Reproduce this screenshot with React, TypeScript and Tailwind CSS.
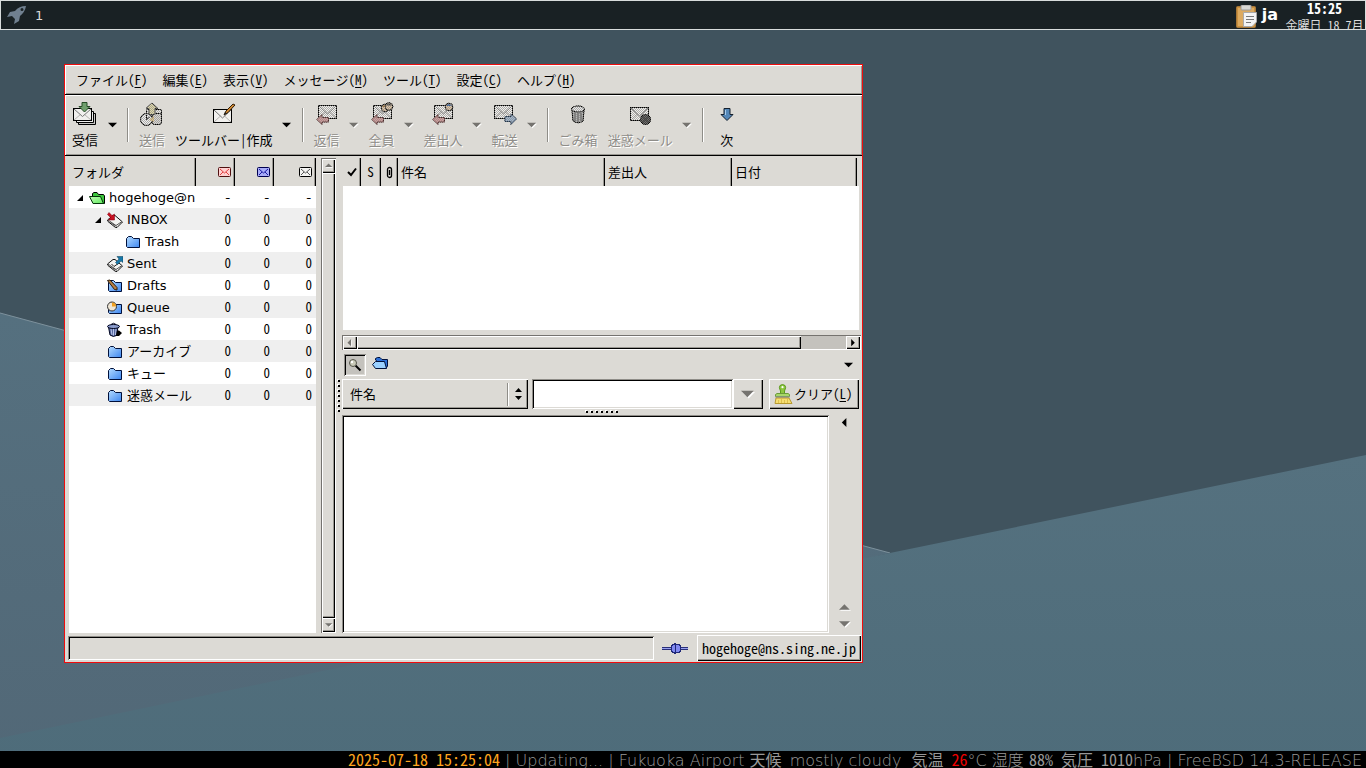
import React from "react";

const mono = "font-['Noto_Sans_Mono_CJK_JP','Noto_Sans_CJK_JP',monospace]";
const sans = "font-['DejaVu_Sans','Noto_Sans_CJK_JP',sans-serif]";
const raised =
  "bg-[#dcdad5] shadow-[inset_1px_1px_0_#fff,inset_-1px_-1px_0_#000,inset_-2px_-2px_0_#9a9892]";
const sunken =
  "shadow-[inset_1px_1px_0_#8f8d88,inset_-1px_-1px_0_#fff,inset_2px_2px_0_#000,inset_-2px_-2px_0_#dcdad5]";

/* ---------- icons ---------- */

function Envelope({ x, y, w = 19, h = 14 }: { x: number; y: number; w?: number; h?: number }) {
  return (
    <g>
      <rect x={x + 0.5} y={y + 0.5} width={w - 1} height={h - 1} fill="#f1f0ee" stroke="#000" />
      <path
        d={`M${x + 1} ${y + h - 1}L${x + w / 2 - 2} ${y + h / 2}M${x + w - 1} ${y + h - 1}L${x + w / 2 + 2} ${y + h / 2}`}
        stroke="#b5b3b0"
        fill="none"
      />
      <path
        d={`M${x + 1} ${y + 1}L${x + w / 2} ${y + h / 2 + 2}L${x + w - 1} ${y + 1}`}
        stroke="#777"
        fill="none"
      />
    </g>
  );
}

function Icon({ children, off = false }: { children: React.ReactNode; off?: boolean }) {
  return (
    <svg width="26" height="26" viewBox="0 0 26 26" aria-hidden="true" className="shrink-0">
      {off ? (
        <>
          <defs>
            <pattern id="checker" width="2" height="2" patternUnits="userSpaceOnUse">
              <rect width="1" height="1" fill="#fff" />
              <rect x="1" y="1" width="1" height="1" fill="#fff" />
            </pattern>
            <mask id="stipple">
              <rect width="26" height="26" fill="url(#checker)" shapeRendering="crispEdges" />
            </mask>
          </defs>
          <g className="opacity-60 brightness-60">{children}</g>
          <g mask="url(#stipple)">{children}</g>
        </>
      ) : (
        children
      )}
    </svg>
  );
}

const RedArrow = () => (
  <path d="M2.5 17.5L8 12.5V15.5H14.5V20H8V22.5Z" fill="#d49a9a" stroke="#502828" />
);
const Head = ({ x, y, c }: { x: number; y: number; c: string }) => (
  <g>
    <circle cx={x} cy={y} r="3.8" fill="#dfc4a4" stroke="#000" />
    <path d={`M${x - 3} ${y - 1}Q${x} ${y - 5} ${x + 3} ${y - 1}Z`} fill={c} />
  </g>
);

const ReceiveIcon = () => (
  <Icon>
    <path d="M6.5 19V22.5H23.5V11.5H20" fill="#c9c8c6" stroke="#000" />
    <path d="M4.500 18V20.500H21.500V9.500H19" fill="#eee" stroke="#000" />
    <Envelope x={1} y={6} w={19} h={13} />
    <path d="M10 0.500H15V4.500H18L12.500 10L7 4.500H10Z" fill="#6f9f6c" stroke="#274d27" />
  </Icon>
);
const SendIcon = () => (
  <Icon off>
    <rect x="7.5" y="7.5" width="15" height="12" rx="1" fill="#e8e6e2" stroke="#000" />
    <circle cx="7.500" cy="17.500" r="6" fill="#eee" stroke="#000" />
    <path d="M7.500 13V17.500L11 15" stroke="#000" fill="none" />
    <rect x="13.500" y="11.500" width="9" height="11" rx="2" fill="#d8d6d2" stroke="#000" />
    <path d="M10 12.500V6.500H7L13 1L19 6.500H16V12.500Z" fill="#e0d8a8" stroke="#333" />
    <path d="M10 18L15 14V20Z" fill="#e0c488" />
  </Icon>
);
const ComposeIcon = () => (
  <Icon>
    <Envelope x={2} y={7} />
    <path d="M13 13L15 9L22 2L24 3L17 10.500Z" fill="#d18a35" stroke="#2e1b05" />
    <path d="M13 13L14 10L16 11.500Z" fill="#222" />
  </Icon>
);
const ReplyIcon = () => (
  <Icon off>
    <Envelope x={4} y={3} />
    <RedArrow />
  </Icon>
);
const ReplyAllIcon = () => (
  <Icon off>
    <Envelope x={4} y={3} />
    <Head x={16} y={6} c="#a5763c" />
    <Head x={20} y={4.5} c="#444" />
    <RedArrow />
  </Icon>
);
const ReplySenderIcon = () => (
  <Icon off>
    <Envelope x={4} y={3} />
    <Head x={19} y={5} c="#35609c" />
    <RedArrow />
  </Icon>
);
const ForwardIcon = () => (
  <Icon off>
    <Envelope x={2} y={3} />
    <path d="M24.500 17L19 12V14.500H13V19.500H19V22.500Z" fill="#9fb6d0" stroke="#1d3450" />
  </Icon>
);
const TrashIcon = () => (
  <Icon off>
    <path d="M7 8L8 19Q13 22.500 18 19L19 8Z" fill="#b8b8b8" stroke="#000" />
    <ellipse cx="13" cy="7" rx="6.500" ry="3" fill="#e8e8e8" stroke="#000" />
    <path d="M10 10.500V19M13 11V20M16 10.500V19" stroke="#444" />
  </Icon>
);
const JunkIcon = () => (
  <Icon off>
    <Envelope x={3} y={5} />
    <circle cx="18.500" cy="17.500" r="5" fill="#444" stroke="#000" />
    <path d="M15 14L22 21M22 14L15 21" stroke="#000" />
  </Icon>
);
const NextIcon = () => (
  <Icon>
    <path d="M10 6.500H16V12.500H19L13 18.500L7 12.500H10Z" fill="#5487b8" stroke="#14202e" />
    <path d="M11.500 8V13" stroke="#a9cbe8" />
  </Icon>
);

function Folder({ green = false }: { green?: boolean }) {
  const id = green ? "fg" : "fb";
  return (
    <svg width="16" height="16" viewBox="0 0 16 16" aria-hidden="true" className="shrink-0">
      <defs>
        <linearGradient id={id} x1="0" y1="0" x2="1" y2="1">
          <stop offset="0" stopColor={green ? "#c4ffb8" : "#b5dcff"} />
          <stop offset="1" stopColor={green ? "#5fe85c" : "#3d86f0"} />
        </linearGradient>
      </defs>
      {green ? (
        <>
          <path d="M3.500 12.500V3.500L5 2.500H8L9.500 4.500H14.500L15.500 6V13.500H5Z" fill="#3cc83c" stroke="#000" />
          <path d="M0.500 6.500H11.500L14.500 13.500H4Z" fill={`url(#${id})`} stroke="#04350a" />
        </>
      ) : (
        <path
          d="M2.500 13.500L1.500 12.500V4.500L3.500 2.500H6.500L8.500 4.500H14.500V13.500Z"
          fill={`url(#${id})`}
          stroke="#00103a"
        />
      )}
    </svg>
  );
}

function OpenFolder() {
  return (
    <svg width="17" height="16" viewBox="0 0 17 16" aria-hidden="true">
      <path d="M3.500 5V3.500L5.500 2.500H8L10 4.500H15.500V11L14 13.500Z" fill="#2a6fd8" stroke="#00103a" />
      <path d="M3.500 6.500H12.500L14.500 13.500H3.500L0.500 9.500Z" fill="#9ad0ff" stroke="#00103a" />
    </svg>
  );
}

type Kind = "account" | "inbox" | "sent" | "drafts" | "queue" | "trash" | "folder";

function FolderIcon({ kind }: { kind: Kind }) {
  if (kind === "account") return <Folder green />;
  if (kind === "folder") return <Folder />;
  if (kind === "drafts" || kind === "queue")
    return (
      <span className="relative block h-4 w-4 shrink-0">
        <Folder />
        <svg className="absolute top-0 left-0" width="16" height="16" viewBox="0 0 16 16" aria-hidden="true">
          {kind === "drafts" ? (
            <path d="M0.500 2.500L3 2L10 9.500V12L7.500 11.500Z" fill="#b98045" stroke="#2b1a08" />
          ) : (
            <>
              <circle cx="5" cy="6.500" r="4.500" fill="#eee6d5" stroke="#333" />
              <path d="M5 2.500A4 4 0 0 1 9 6.500H5Z" fill="#f0a020" />
            </>
          )}
        </svg>
      </span>
    );
  return (
    <svg width="16" height="16" viewBox="0 0 16 16" aria-hidden="true" className="shrink-0">
      {kind === "trash" ? (
        <>
          <path d="M1.500 5L3 13Q6 15.500 9.500 13.500L11 5Z" fill="#5568a0" stroke="#000520" />
          <path d="M4 7L5 13M6.500 7V13.500M9 7L8.500 13" stroke="#b8c4e8" />
          <ellipse cx="6.500" cy="4.500" rx="6" ry="2" fill="#8a9bcc" stroke="#000520" />
          <path d="M4 2.500Q6.500 0 9 2.500" stroke="#000520" fill="none" />
          <path d="M10 8.500H12L15 11L12 14H9Z" fill="#000" />
        </>
      ) : (
        <>
          <path d="M0.500 8L6 3.500H8L15.500 10L10 15.500H8.500L1 9.500Z" fill="#f4f4f2" stroke="#111" />
          <path d="M1 8L9 13.500L15 9.500M3.500 10.500L9.500 14.500" fill="none" stroke="#555" />
          {kind === "inbox" ? (
            <path d="M2 0.500L5 3.500L7.500 2V8H1.500L3.500 5.500L0.500 2.500Z" fill="#c81020" stroke="#780010" strokeWidth=".5" />
          ) : (
            <>
              <path d="M4.500 8L7 10.500L12 7" fill="none" stroke="#222" />
              <path d="M10 0.500H16V6.500L14 5L10.500 8.500L8.500 6.500L12 3Z" fill="#1878a8" stroke="#063850" strokeWidth=".5" />
            </>
          )}
        </>
      )}
    </svg>
  );
}

function MiniMail({ tone, label }: { tone: "red" | "blue" | "plain"; label: string }) {
  const fill = { red: "#ffd0d0", blue: "#a8acf8", plain: "#f4f4f2" }[tone];
  const line = { red: "#e04040", blue: "#1818a0", plain: "#555" }[tone];
  const edge = { red: "#501010", blue: "#000050", plain: "#000" }[tone];
  return (
    <svg width="13" height="10" viewBox="0 0 13 10" role="img" aria-label={label} className="ml-auto block">
      <rect x=".5" y=".5" width="12" height="9" rx="1" fill={fill} stroke={edge} />
      <path d="M2 2L6.500 6L11 2M2 8L5 5M11 8L8 5" stroke={line} fill="none" />
    </svg>
  );
}

type Dir = "up" | "down" | "left" | "right";
function Tri({ dir, off = false, size = 9 }: { dir: Dir; off?: boolean; size?: number }) {
  const d = {
    up: "M0 7L5 2L10 7Z",
    down: "M0 3L5 8L10 3Z",
    left: "M7 0L2 5L7 10Z",
    right: "M3 0L8 5L3 10Z",
  }[dir];
  return (
    <svg width={size} height={size} viewBox="0 0 11 11" aria-hidden="true" className="shrink-0">
      {off && <path d={d} fill="#fff" transform="translate(1 1)" />}
      <path d={d} fill={off ? "#75736f" : "#000"} />
    </svg>
  );
}

/* ---------- menu and toolbar ---------- */

const menus: [string, string][] = [
  ["ファイル", "F"],
  ["編集", "E"],
  ["表示", "V"],
  ["メッセージ", "M"],
  ["ツール", "T"],
  ["設定", "C"],
  ["ヘルプ", "H"],
];

function MenuBar() {
  return (
    <nav className="flex h-[30px] items-center gap-px border-b border-black pl-1 shadow-[inset_1px_1px_0_#fff,inset_-1px_-1px_0_#9a9892]">
      {menus.map(([text, key]) => (
        <button key={key} type="button" className="px-[7px] leading-5">
          {text}(<span className="underline underline-offset-2">{key}</span>)
        </button>
      ))}
    </nav>
  );
}

function Tool({ icon, label, off = false }: { icon: React.ReactNode; label: string; off?: boolean }) {
  return (
    <button
      type="button"
      disabled={off}
      className={`flex h-full flex-col items-center px-[3px] pt-[7px] whitespace-nowrap ${
        off ? "text-[#8f8d89] [text-shadow:1px_1px_0_#fff]" : ""
      }`}
    >
      {icon}
      <span className="mt-[2px] leading-5">{label}</span>
    </button>
  );
}

function Drop({ off = false, label }: { off?: boolean; label: string }) {
  return (
    <button type="button" disabled={off} aria-label={label} className="flex h-full w-[21px] items-center justify-center">
      <Tri dir="down" off={off} size={10} />
    </button>
  );
}

function Sep() {
  return (
    <div className="mr-[3px] flex h-full w-2 items-center justify-center">
      <div className="h-[34px] w-[2px] border-r border-l border-r-white border-l-[#8f8d88]" />
    </div>
  );
}

function ToolBar() {
  return (
    <div
      role="toolbar"
      className="flex h-[61px] items-stretch gap-px border-b border-black pl-1 shadow-[inset_1px_1px_0_#fff,inset_-1px_-1px_0_#9a9892]"
    >
      <Tool icon={<ReceiveIcon />} label="受信" />
      <Drop label="受信メニュー" />
      <Sep />
      <div className="flex gap-1">
        <Tool icon={<SendIcon />} label="送信" off />
        <Tool icon={<ComposeIcon />} label="ツールバー|作成" />
      </div>
      <Drop label="作成メニュー" />
      <Sep />
      <Tool icon={<ReplyIcon />} label="返信" off />
      <Drop off label="返信メニュー" />
      <Tool icon={<ReplyAllIcon />} label="全員" off />
      <Drop off label="全員メニュー" />
      <Tool icon={<ReplySenderIcon />} label="差出人" off />
      <Drop off label="差出人メニュー" />
      <Tool icon={<ForwardIcon />} label="転送" off />
      <Drop off label="転送メニュー" />
      <Sep />
      <div className="flex gap-1">
        <Tool icon={<TrashIcon />} label="ごみ箱" off />
        <Tool icon={<JunkIcon />} label="迷惑メール" off />
      </div>
      <Drop off label="迷惑メールメニュー" />
      <Sep />
      <Tool icon={<NextIcon />} label="次" />
    </div>
  );
}

/* ---------- folder tree ---------- */

const folders: { name: string; level: string; kind: Kind; open?: boolean; n: string }[] = [
  { name: "hogehoge@n", level: "pl-[7px]", kind: "account", open: true, n: "-" },
  { name: "INBOX", level: "pl-[25px]", kind: "inbox", open: true, n: "0" },
  { name: "Trash", level: "pl-[43px]", kind: "folder", n: "0" },
  { name: "Sent", level: "pl-[25px]", kind: "sent", n: "0" },
  { name: "Drafts", level: "pl-[25px]", kind: "drafts", n: "0" },
  { name: "Queue", level: "pl-[25px]", kind: "queue", n: "0" },
  { name: "Trash", level: "pl-[25px]", kind: "trash", n: "0" },
  { name: "アーカイブ", level: "pl-[25px]", kind: "folder", n: "0" },
  { name: "キュー", level: "pl-[25px]", kind: "folder", n: "0" },
  { name: "迷惑メール", level: "pl-[25px]", kind: "folder", n: "0" },
];

const th =
  "h-7 border-r border-black bg-[#dcdad5] p-0 text-left font-normal whitespace-nowrap shadow-[inset_-1px_0_0_#9a9892]";

function FolderTree() {
  return (
    <div className="w-[247px] bg-white">
      <table className="w-full table-fixed border-separate border-spacing-0">
        <colgroup>
          <col />
          <col className="w-[39px]" />
          <col className="w-[39px]" />
          <col className="w-[42px]" />
        </colgroup>
        <thead>
          <tr>
            <th className={`${th} pl-[3px]`}>フォルダ</th>
            <th className={`${th} pr-[3px]`}><MiniMail tone="red" label="新着" /></th>
            <th className={`${th} pr-[3px]`}><MiniMail tone="blue" label="未読" /></th>
            <th className={`${th} pr-[3px]`}><MiniMail tone="plain" label="合計" /></th>
          </tr>
        </thead>
        <tbody>
          {folders.map((f, i) => (
            <tr key={i} className="even:bg-[#efefef]">
              <td className="p-0">
                <div className={`flex h-[22px] items-center overflow-hidden pt-px ${f.level}`}>
                  <svg width="9" height="9" viewBox="0 0 9 9" aria-hidden="true" className="mr-1 shrink-0">
                    {f.open && <path d="M7 2V8H1Z" fill="#000" />}
                  </svg>
                  <FolderIcon kind={f.kind} />
                  <span className={`ml-1 leading-5 whitespace-nowrap ${sans}`}>{f.name}</span>
                </div>
              </td>
              {[0, 1, 2].map((c) => (
                <td key={c} className="p-0 pr-1 text-right leading-5">{f.n}</td>
              ))}
            </tr>
          ))}
        </tbody>
      </table>
    </div>
  );
}

function VScroll() {
  return (
    <div className="ml-[5px] flex w-[15px] flex-col bg-[#c4c2bd] p-px shadow-[inset_1px_1px_0_#75736f,inset_-1px_-1px_0_#fff]">
      <button type="button" aria-label="上へ" className={`flex h-[14px] items-center justify-center ${raised}`}>
        <Tri dir="up" off size={8} />
      </button>
      <div className={`flex-1 ${raised}`} />
      <button type="button" aria-label="下へ" className={`flex h-[14px] items-center justify-center ${raised}`}>
        <Tri dir="down" off size={8} />
      </button>
    </div>
  );
}

function Grip({ vertical = false }: { vertical?: boolean }) {
  return (
    <div
      className={
        vertical
          ? "flex w-[6px] flex-col items-center justify-center gap-[3px]"
          : "flex h-[6px] items-center justify-center gap-[3px]"
      }
    >
      {[0, 1, 2, 3, 4, 5, 6].map((i) => (
        <span key={i} className="h-[2px] w-[2px] bg-black shadow-[-1px_-1px_0_#fff]" />
      ))}
    </div>
  );
}

/* ---------- message list, search and body ---------- */

function MessageList() {
  return (
    <div className="mr-[2px] ml-px h-[172px] bg-white">
      <table className="w-full table-fixed border-separate border-spacing-0">
        <colgroup>
          <col className="w-[18px]" />
          <col className="w-[20px]" />
          <col className="w-[17px]" />
          <col className="w-[207px]" />
          <col className="w-[127px]" />
          <col />
          <col className="w-[2px]" />
        </colgroup>
        <thead>
          <tr>
            <th className={th}>
              <svg width="10" height="10" viewBox="0 0 10 10" role="img" aria-label="マーク" className="mx-auto block">
                <path d="M1 5L4 8L9 1.500" stroke="#000" strokeWidth="2" fill="none" />
              </svg>
            </th>
            <th className={th}><span className="block text-center">S</span></th>
            <th className={th}>
              <svg width="9" height="13" viewBox="0 0 9 13" role="img" aria-label="添付" className="mx-auto block">
                <path d="M6.500 3V9.500A2 2 0 0 1 2.500 9.500V3.500A2 2 0 0 1 6.500 3.500M4.500 4V9" stroke="#000" strokeWidth="1.300" fill="none" />
              </svg>
            </th>
            <th className={`${th} pl-[3px]`}>件名</th>
            <th className={`${th} pl-[3px]`}>差出人</th>
            <th className={`${th} pl-[3px]`}>日付</th>
            <th className="bg-[#dcdad5] p-0" />
          </tr>
        </thead>
      </table>
    </div>
  );
}

function HScroll() {
  return (
    <div className="mt-[5px] flex h-[15px] bg-[#c4c2bd] p-px shadow-[inset_1px_1px_0_#75736f,inset_-1px_-1px_0_#fff]">
      <button type="button" aria-label="左へ" className={`flex w-[14px] items-center justify-center ${raised}`}>
        <Tri dir="left" off size={8} />
      </button>
      <div className={`w-[444px] ${raised}`} />
      <div className="flex-1" />
      <button type="button" aria-label="右へ" className={`flex w-[14px] items-center justify-center ${raised}`}>
        <Tri dir="right" size={8} />
      </button>
    </div>
  );
}

function SearchArea() {
  return (
    <>
      <div className="mt-[3px] flex h-6 items-center pr-[7px] pl-[2px]">
        <button
          type="button"
          aria-label="検索"
          aria-pressed="true"
          className={`flex h-[22px] w-[22px] items-center justify-center bg-[#c4c2bd] ${sunken}`}
        >
          <svg width="14" height="14" viewBox="0 0 14 14" aria-hidden="true">
            <path d="M7.500 7.500L12.500 12.500" stroke="#000" strokeWidth="2" />
            <circle cx="5" cy="5" r="3.500" fill="#c9cab8" stroke="#55554a" />
            <circle cx="4" cy="4" r="1.200" fill="#fff" />
          </svg>
        </button>
        <button type="button" aria-label="フォルダを開く" className="mb-1 ml-[6px]">
          <OpenFolder />
        </button>
        <button type="button" aria-label="検索メニュー" className="ml-auto">
          <Tri dir="down" size={10} />
        </button>
      </div>
      <div className="mt-[2px] flex h-[30px]">
        <div className={`relative w-[186px] ${raised}`}>
          <select aria-label="検索対象" className="h-full w-full appearance-none bg-transparent pl-2 outline-none">
            <option>件名</option>
          </select>
          <div className="pointer-events-none absolute top-[3px] right-[5px] flex h-[24px] items-center gap-[5px]">
            <div className="h-[23px] w-[2px] border-r border-l border-r-white border-l-[#8f8d88]" />
            <svg width="9" height="14" viewBox="0 0 9 14" aria-hidden="true">
              <path d="M1 5L4.500 1L8 5ZM1 9L4.500 13L8 9Z" fill="#000" />
            </svg>
          </div>
        </div>
        <input type="text" aria-label="検索文字列" className={`ml-1 min-w-0 flex-1 bg-white px-2 outline-none ${sunken}`} />
        <button type="button" aria-label="履歴" className={`flex w-[30px] items-center justify-center ${raised}`}>
          <Tri dir="down" off size={14} />
        </button>
        <button type="button" className={`mr-[2px] ml-[6px] flex w-[90px] items-center pl-[5px] whitespace-nowrap ${raised}`}>
          <svg width="20" height="22" viewBox="0 0 20 22" aria-hidden="true" className="shrink-0">
            <path d="M6.500 11V8Q4.500 4 6 2.500Q8.500 0.500 11 2.500Q12.500 4 10.500 8V11Z" fill="#8cc63f" stroke="#5c9a1e" />
            <circle cx="8.500" cy="4.200" r="1.100" fill="#fff" />
            <path d="M1.500 13.500V11.500L3 10.500H14L15.500 11.500V13.500Z" fill="#a8d868" stroke="#6a9a3a" />
            <path d="M1.500 13.500H15.500V15H1.500Z" fill="#99a" />
            <path d="M2 15H15L18 20.500H1Z" fill="#f6df72" stroke="#b89a30" />
            <path d="M4.500 17V20M7.500 16V20M10.500 17V20M13.500 16V20" stroke="#e0c050" />
          </svg>
          <span className="leading-5">クリア(<span className="underline underline-offset-2">L</span>)</span>
        </button>
      </div>
    </>
  );
}

function MessageView() {
  return (
    <div className="flex min-h-0 flex-1">
      <div className={`flex-1 bg-white ${sunken}`} />
      <div className="flex w-8 flex-col items-center pt-[3px] pb-[3px]">
        <button type="button" aria-label="添付一覧"><Tri dir="left" size={10} /></button>
        <div className="flex-1" />
        <button type="button" aria-label="前へ" className="flex"><Tri dir="up" off size={12} /></button>
        <button type="button" aria-label="次へ" className="mt-1 flex"><Tri dir="down" off size={12} /></button>
      </div>
    </div>
  );
}

function StatusBar() {
  return (
    <footer className="flex h-[29px] items-start pt-[2px] pr-px pl-[3px]">
      <div className={`mt-px h-6 flex-1 ${sunken}`} />
      <button type="button" aria-label="オンライン" className="mx-2 mt-[7px]">
        <svg width="27" height="14" viewBox="0 0 27 14" aria-hidden="true" shapeRendering="crispEdges" className="block">
          <path d="M0 5H9V8H0ZM19 5H26V8H19Z" fill="#2a3078" />
          <path d="M0 6H9V7H0ZM19 6H26V7H19Z" fill="#9aa2f0" />
          <path d="M9 4L10 2H12V1H14V2H17L19 4V9L17 11H14V12H12V11H10L9 9Z" fill="#202878" />
          <path d="M10 4L11 3H13V10H11L10 9ZM14 3H17L18 5V8L17 10H14Z" fill="#8088f0" />
        </svg>
      </button>
      <button type="button" className={`h-[26px] w-[164px] text-center text-[14px] leading-6 ${raised}`}>
        hogehoge@ns.sing.ne.jp
      </button>
    </footer>
  );
}

function MailWindow() {
  return (
    <section
      className={`absolute top-[64px] left-[64px] flex h-[599px] w-[799px] flex-col border border-[#f00c0c] bg-[#dcdad5] text-[13px] text-black ${mono}`}
    >
      <MenuBar />
      <ToolBar />
      <div className="flex min-h-0 flex-1 pt-[2px] pr-px pl-1">
        <FolderTree />
        <VScroll />
        <Grip vertical />
        <div className="flex min-w-0 flex-1 flex-col">
          <MessageList />
          <HScroll />
          <SearchArea />
          <Grip />
          <MessageView />
        </div>
      </div>
      <StatusBar />
    </section>
  );
}

/* ---------- desktop ---------- */

function Wallpaper() {
  return (
    <svg className="absolute inset-0 h-full w-full" viewBox="0 0 1366 768" preserveAspectRatio="none" aria-hidden="true">
      <defs>
        <linearGradient id="low" x1="0" y1="0" x2="0" y2="1">
          <stop offset="0" stopColor="#55717f" />
          <stop offset="1" stopColor="#4e6c7a" />
        </linearGradient>
        <linearGradient id="mid" x1="0" y1="0" x2="0" y2="1">
          <stop offset="0" stopColor="#55707f" />
          <stop offset="1" stopColor="#526877" />
        </linearGradient>
      </defs>
      <rect width="1366" height="768" fill="#40535e" />
      <path d="M0 313L890 553L0 768Z" fill="url(#mid)" />
      <path d="M0 313L890 553" stroke="#7d919c" fill="none" />
      <path d="M0 738L890 553L1366 455V768H0Z" fill="url(#low)" />
    </svg>
  );
}

function TopBar() {
  return (
    <header className="relative flex h-[30px] items-center overflow-hidden border border-[#d8dcdc] bg-[#192124] pl-[5px] text-white">
      <svg width="21" height="20" viewBox="0 0 21 20" aria-hidden="true">
        <path
          fillRule="evenodd"
          d="M20 1Q13 1 9 6L4 7L1 12L6 11L9 14L8 19L13 16L14 11Q19 7 20 1ZM16 3A1.500 1.500 0 1 1 16 6A1.500 1.500 0 1 1 16 3Z"
          fill="#708090"
        />
      </svg>
      <span className={`mt-[2px] ml-2 text-[13px] text-[#dcdcdc] ${sans}`}>1</span>
      <div className="ml-auto flex h-full items-center">
        <svg width="24" height="24" viewBox="0 0 24 24" aria-hidden="true" className="mt-1">
          <rect x="1.500" y="1.500" width="19" height="21" rx="1" fill="#c89040" stroke="#a87838" />
          <rect x="3" y="3" width="16" height="18" fill="#dcaa60" />
          <rect x="6" y="0" width="10" height="5" rx="1" fill="#d8d8d4" stroke="#999" />
          <path d="M8.500 7.500H21.500V17L17 21.500H8.500Z" fill="#f4f4f4" stroke="#aaa" />
          <path d="M11 11.500H19M11 14.500H19M11 17.500H16" stroke="#777" />
        </svg>
        <span className={`ml-[3px] text-[16px] font-bold ${sans}`}>ja</span>
        <div className={`ml-[6px] flex h-full w-[81px] flex-col items-center whitespace-nowrap ${mono}`}>
          <span className="text-[14px] leading-[15px] font-bold">15:25</span>
          <span className="text-[12px] leading-[18px] text-[#dcdcdc]">金曜日 18 7月</span>
        </div>
      </div>
    </header>
  );
}

function BottomBar() {
  const fixed = `font-normal ${mono}`;
  return (
    <footer
      className={`relative mt-auto h-[17px] overflow-hidden bg-black pr-1 text-right text-[16px] leading-4 font-extralight whitespace-pre text-[#989898] ${sans}`}
    >
      <span className={`text-[#ffa51e] ${fixed}`}>2025-07-18 15:25:04</span>
      {" | Updating... | Fukuoka Airport "}
      <span className={fixed}>天候 </span>
      {"mostly cloudy  "}
      <span className={fixed}>気温 </span>
      <span className={`text-[#f00000] ${fixed}`}>26</span>
      {"°C 湿度 "}
      <span className={fixed}>88% 気圧 1010</span>
      {"hPa | FreeBSD 14.3-RELEASE"}
    </footer>
  );
}

export default function App() {
  return (
    <main className="relative flex min-h-screen flex-col overflow-hidden">
      <Wallpaper />
      <TopBar />
      <MailWindow />
      <BottomBar />
    </main>
  );
}
